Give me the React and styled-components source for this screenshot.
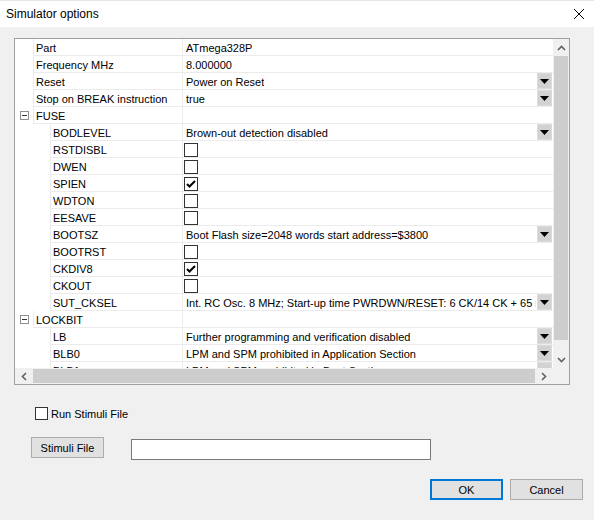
import React from "react";
import styled, { createGlobalStyle } from "styled-components";

const GlobalStyle = createGlobalStyle`
  html, body {
    margin: 0;
    padding: 0;
    background: #f0f0f0;
  }
  body {
    font-family: "Liberation Sans", Arial, sans-serif;
    font-size: 11px;
    color: #000;
  }
`;

const Window = styled.div`
  width: 594px;
  height: 520px;
  display: flex;
  flex-direction: column;
  background: #f0f0f0;
  box-sizing: border-box;
  border-top: 1px solid #e6e6e6;
`;

const TitleBar = styled.div`
  height: 26px;
  background: #fff;
  display: flex;
  align-items: center;
  justify-content: space-between;
  padding: 0 10px 0 6px;
  font-size: 12px;
`;

const Body = styled.div`
  flex: 1;
  display: flex;
  flex-direction: column;
  padding: 11px 0 0 14px;
`;

const Panel = styled.div`
  width: 556px;
  height: 347px;
  box-sizing: border-box;
  border: 1px solid #a0a0a0;
  background: #fff;
  display: grid;
  grid-template-columns: 1fr 16px;
  grid-template-rows: 1fr 16px;
  overflow: hidden;
`;

const Rows = styled.div`
  overflow: hidden;
  display: flex;
  flex-direction: column;
`;

const Row = styled.div`
  display: grid;
  grid-template-columns: 167px 1fr;
  height: 17px;
  flex-shrink: 0;
`;

const NameCell = styled.div`
  display: flex;
  min-width: 0;
`;

const Gutter = styled.div`
  width: ${(p) => p.$indent}px;
  flex-shrink: 0;
  display: flex;
  align-items: center;
  justify-content: flex-start;
  padding-left: 5px;
  box-sizing: border-box;
`;

const NameBox = styled.div`
  flex: 1;
  min-width: 0;
  border-left: 1px solid #ebebeb;
  border-bottom: 1px solid #ebebeb;
  padding: 1px 0 0 2px;
  display: flex;
  align-items: center;
  white-space: nowrap;
  overflow: hidden;
`;

const ValueCell = styled.div`
  position: relative;
  min-width: 0;
  border-left: 1px solid #ebebeb;
  border-bottom: 1px solid #ebebeb;
  display: flex;
  align-items: center;
  padding-left: 3px;
  padding-right: ${(p) => (p.$select ? "17px" : "0")};
  white-space: nowrap;
  overflow: hidden;
`;

const ValueText = styled.span`
  overflow: hidden;
  padding-top: 1px;
`;

const DropButton = styled.div`
  position: absolute;
  right: 1px;
  top: 0;
  width: 15px;
  height: 16px;
  background: #d2d2d2;
  border: 1px solid #dcdcdc;
  box-sizing: border-box;
  display: flex;
  align-items: center;
  justify-content: center;
`;

const GridCheck = styled.div`
  width: 14px;
  height: 14px;
  box-sizing: border-box;
  border: 1px solid #333;
  background: #fff;
  margin-left: -2px;
  margin-top: 1px;
  display: flex;
  align-items: center;
  justify-content: center;
`;

const Expander = styled.div`
  width: 9px;
  height: 9px;
  box-sizing: border-box;
  border: 1px solid #919191;
  display: flex;
  align-items: center;
  justify-content: center;
  &::after {
    content: "";
    width: 5px;
    height: 1px;
    background: #333;
  }
`;

const VScroll = styled.div`
  background: #f0f0f0;
  display: flex;
  flex-direction: column;
`;

const HScroll = styled.div`
  background: #f0f0f0;
  display: flex;
  grid-column: 1 / 2;
`;

const Corner = styled.div`
  background: #f0f0f0;
`;

const ArrowBox = styled.div`
  width: ${(p) => (p.$h ? "18px" : "16px")};
  height: 17px;
  flex-shrink: 0;
  display: flex;
  align-items: center;
  justify-content: center;
`;

const VThumb = styled.div`
  height: 284px;
  margin: 0 1px;
  background: #cdcdcd;
`;

const VTrack = styled.div`
  flex: 1;
`;

const HThumb = styled.div`
  flex: 1;
  margin: 1px 0;
  background: #cdcdcd;
`;

const Options = styled.div`
  display: flex;
  flex-direction: column;
  padding-left: 21px;
  margin-top: 22px;
`;

const CheckLabel = styled.label`
  display: flex;
  align-items: center;
  gap: 3px;
  font-size: 11px;
`;

const Box = styled.span`
  width: 13px;
  height: 13px;
  box-sizing: border-box;
  border: 1px solid #333;
  background: #fff;
`;

const FileRow = styled.div`
  display: flex;
  align-items: flex-start;
  margin-top: 17px;
  margin-left: -4px;
  gap: 27px;
`;

const Button = styled.button`
  width: 73px;
  height: 21px;
  box-sizing: border-box;
  background: #e1e1e1;
  border: ${(p) => (p.$default ? "2px solid #0078d7" : "1px solid #adadad")};
  font-family: "Liberation Sans", Arial, sans-serif;
  font-size: 11px;
  color: #000;
  padding: 0;
`;

const TextInput = styled.div`
  width: 300px;
  height: 21px;
  margin-top: 2px;
  box-sizing: border-box;
  border: 1px solid #7a7a7a;
  background: #fff;
`;

const Footer = styled.div`
  display: flex;
  justify-content: flex-end;
  gap: 7px;
  padding-right: 11px;
  margin-top: 19px;
`;

const Tri = () => (
  <svg width="9" height="5" viewBox="0 0 9 5">
    <path d="M0 0h9L4.5 5z" fill="#000" />
  </svg>
);

const Tick = () => (
  <svg width="10" height="8" viewBox="0 0 10 8">
    <path d="M1 4l2.5 2.5L9 1" stroke="#000" strokeWidth="2" fill="none" />
  </svg>
);

const Chevron = ({ dir }) => {
  const d = {
    up: "M1 5l3.5-3.5L8 5",
    down: "M1 1l3.5 3.5L8 1",
    left: "M5 1L1.5 4.5 5 8",
    right: "M1 1l3.5 3.5L1 8",
  }[dir];
  const vert = dir === "up" || dir === "down";
  return (
    <svg width={vert ? 9 : 6} height={vert ? 6 : 9} viewBox={vert ? "0 0 9 6" : "0 0 6 9"}>
      <path d={d} stroke="#606060" strokeWidth="1.6" fill="none" />
    </svg>
  );
};

const rows = [
  { name: "Part", value: "ATmega328P" },
  { name: "Frequency MHz", value: "8.000000" },
  { name: "Reset", value: "Power on Reset", select: true },
  { name: "Stop on BREAK instruction", value: "true", select: true },
  { group: "FUSE" },
  { name: "BODLEVEL", value: "Brown-out detection disabled", select: true, sub: true },
  { name: "RSTDISBL", check: false, sub: true },
  { name: "DWEN", check: false, sub: true },
  { name: "SPIEN", check: true, sub: true },
  { name: "WDTON", check: false, sub: true },
  { name: "EESAVE", check: false, sub: true },
  { name: "BOOTSZ", value: "Boot Flash size=2048 words start address=$3800", select: true, sub: true },
  { name: "BOOTRST", check: false, sub: true },
  { name: "CKDIV8", check: true, sub: true },
  { name: "CKOUT", check: false, sub: true },
  {
    name: "SUT_CKSEL",
    value: "Int. RC Osc. 8 MHz; Start-up time PWRDWN/RESET: 6 CK/14 CK + 65 ms",
    select: true,
    sub: true,
  },
  { group: "LOCKBIT" },
  { name: "LB", value: "Further programming and verification disabled", select: true, sub: true },
  { name: "BLB0", value: "LPM and SPM prohibited in Application Section", select: true, sub: true },
  { name: "BLB1", value: "LPM and SPM prohibited in Boot Section", select: true, sub: true },
];

const PropRow = ({ row }) => {
  if (row.group) {
    return (
      <Row>
        <NameCell>
          <Gutter $indent={18}>
            <Expander />
          </Gutter>
          <NameBox>{row.group}</NameBox>
        </NameCell>
        <ValueCell />
      </Row>
    );
  }
  return (
    <Row>
      <NameCell>
        <Gutter $indent={row.sub ? 35 : 18} />
        <NameBox>{row.name}</NameBox>
      </NameCell>
      <ValueCell $select={row.select}>
        {row.check !== undefined ? (
          <GridCheck>{row.check && <Tick />}</GridCheck>
        ) : (
          <ValueText>{row.value}</ValueText>
        )}
        {row.select && (
          <DropButton>
            <Tri />
          </DropButton>
        )}
      </ValueCell>
    </Row>
  );
};

const App = () => {
  return (
    <Window>
      <GlobalStyle />
      <TitleBar>
        <span>Simulator options</span>
        <svg width="10" height="10" viewBox="0 0 10 10">
          <path d="M0 0L10 10M10 0L0 10" stroke="#000" strokeWidth="1" />
        </svg>
      </TitleBar>
      <Body>
        <Panel>
          <Rows>
            {rows.map((r, i) => (
              <PropRow key={i} row={r} />
            ))}
          </Rows>
          <VScroll>
            <ArrowBox>
              <Chevron dir="up" />
            </ArrowBox>
            <VThumb />
            <VTrack />
            <ArrowBox>
              <Chevron dir="down" />
            </ArrowBox>
          </VScroll>
          <HScroll>
            <ArrowBox $h>
              <Chevron dir="left" />
            </ArrowBox>
            <HThumb />
            <ArrowBox $h>
              <Chevron dir="right" />
            </ArrowBox>
          </HScroll>
          <Corner />
        </Panel>
        <Options>
          <CheckLabel>
            <Box />
            Run Stimuli File
          </CheckLabel>
          <FileRow>
            <Button>Stimuli File</Button>
            <TextInput />
          </FileRow>
        </Options>
        <Footer>
          <Button $default>OK</Button>
          <Button>Cancel</Button>
        </Footer>
      </Body>
    </Window>
  );
};

export default App;
